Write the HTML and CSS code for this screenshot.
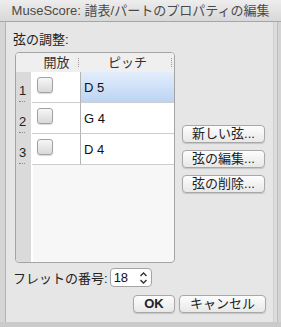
FILE: index.html
```html
<!DOCTYPE html>
<html lang="ja">
<head>
  <meta charset="UTF-8">
  <title>譜表/パートのプロパティの編集</title>
  <link rel="stylesheet" href="styles.css">
</head>
<body>

<div class="window">
  <div class="titlebar">MuseScore: 譜表/パートのプロパティの編集</div>
  <div class="body">
    <div class="edge-left"></div>
    <div class="sheet">
      <div class="section-label">弦の調整:</div>

      <div class="strings">
        <div class="string-table">
          <div class="th th-num"></div>
          <div class="th th-open">開放<span class="grip"></span></div>
          <div class="th th-pitch">ピッチ<span class="grip"></span></div>

          <div class="num"><span>1</span><i></i></div>
          <div class="cell cell-open"><span class="checkbox"></span></div>
          <div class="cell cell-pitch selected">D 5</div>

          <div class="num"><span>2</span><i></i></div>
          <div class="cell cell-open"><span class="checkbox"></span></div>
          <div class="cell cell-pitch">G 4</div>

          <div class="num"><span>3</span><i></i></div>
          <div class="cell cell-open"><span class="checkbox"></span></div>
          <div class="cell cell-pitch">D 4</div>

          <div class="num filler-num"></div>
          <div class="filler"></div>
        </div>

        <div class="side-buttons">
          <button class="btn">新しい弦...</button>
          <button class="btn">弦の編集...</button>
          <button class="btn">弦の削除...</button>
        </div>
      </div>

      <div class="fret-row">
        <span>フレットの番号:</span>
        <div class="spinner">
          <span class="spinner-value">18</span>
          <svg class="spinner-arrows" width="9" height="14" viewBox="0 0 9 14">
            <path d="M1.5 5 L4.5 2 L7.5 5" fill="none" stroke="#333" stroke-width="1.4"/>
            <path d="M1.5 9 L4.5 12 L7.5 9" fill="none" stroke="#333" stroke-width="1.4"/>
          </svg>
        </div>
      </div>

      <div class="actions">
        <button class="btn btn-ok">OK</button>
        <button class="btn btn-cancel">キャンセル</button>
      </div>
    </div>
    <div class="edge-right"></div>
  </div>
  <div class="under"></div>
</div>

</body>
</html>
```

FILE: styles.css
```css
html, body {
  margin: 0;
  padding: 0;
}

body {
  width: 281px;
  height: 327px;
  overflow: hidden;
  background-color: #d2d2d2;
  font-family: "Liberation Sans", "Noto Sans CJK JP", sans-serif;
  font-size: 13px;
  color: #222;
}

.window {
  width: 281px;
  height: 327px;
  display: flex;
  flex-direction: column;
}

.titlebar {
  height: 21px;
  line-height: 22px;
  text-align: center;
  color: #4a4a4a;
  background: linear-gradient(#ededed, #d8d8d8);
  border-bottom: 1px solid #a9a9a9;
  white-space: nowrap;
}

.body {
  display: flex;
  height: 300px;
}

.edge-left {
  width: 5px;
  background-color: #d6d6d6;
  border-right: 1px solid #c4c4c4;
}

.edge-right {
  width: 7px;
  background: linear-gradient(90deg, #dcdcdc 0, #dcdcdc 3px, #bdbdbd 3px, #bdbdbd 4px, #d4d4d4 4px);
  border-left: 1px solid #cfcfcf;
}

.sheet {
  flex: 1;
  background-color: #e6e6e6;
  padding: 9px 0 0 0;
  box-shadow: 0 1px 2px rgba(0,0,0,0.25);
}

.section-label {
  height: 21px;
  line-height: 18px;
  padding-left: 7px;
}

.strings {
  display: flex;
  align-items: flex-start;
}

.string-table {
  margin-left: 9px;
  width: 158px;
  height: 209px;
  border: 1px solid #a4a4a4;
  border-radius: 4px;
  overflow: hidden;
  background-color: #f7f7f7;
  display: grid;
  grid-template-columns: 16px 49px 1fr;
  grid-template-rows: 19px 31px 31px 31px 1fr;
}

.th {
  background-color: #efefef;
  text-align: center;
  line-height: 19px;
  position: relative;
  color: #333;
}

.grip {
  position: absolute;
  right: 1px;
  top: 5px;
  width: 1px;
  height: 9px;
  border-left: 1px dotted #9a9a9a;
}

.num {
  background-color: #dadada;
  border-right: 1px solid #ffffff;
  width: 15px;
  position: relative;
}

.num span {
  position: absolute;
  left: 3px;
  bottom: 6px;
  line-height: 13px;
  color: #222;
}

.num i {
  position: absolute;
  left: 3px;
  bottom: 1px;
  width: 6px;
  border-top: 1px dotted #8a8a8a;
}

.cell {
  background-color: #ffffff;
  border-bottom: 1px solid #cdcdcd;
}

.cell-open {
  border-right: 1px solid #b4b4b4;
  padding: 5px 0 0 5px;
  box-sizing: border-box;
}

.cell-pitch {
  padding-left: 3px;
  line-height: 31px;
  color: #111;
}

.cell-pitch.selected {
  background: linear-gradient(#e3edfb, #bcd4f4);
}

.checkbox {
  display: block;
  width: 14px;
  height: 14px;
  border: 1px solid #a2a2a2;
  border-radius: 3px;
  background: linear-gradient(#f6f6f6, #d9d9d9);
  box-shadow: 0 1px 1px rgba(0,0,0,0.15);
}

.filler {
  background-color: #f7f7f7;
  border-left: 1px solid #ffffff;
}

.side-buttons {
  margin-left: 7px;
  margin-top: 73px;
  display: flex;
  flex-direction: column;
  gap: 7px;
}

.btn {
  font-family: "Liberation Sans", "Noto Sans CJK JP", sans-serif;
  font-size: 13px;
  color: #222;
  height: 18px;
  padding: 0;
  line-height: 16px;
  border: 1px solid #a8a8a8;
  border-radius: 4px;
  background: linear-gradient(#fdfdfd, #e8e8e8);
  box-shadow: 0 1px 1px rgba(0,0,0,0.15);
}

.side-buttons .btn {
  width: 83px;
}

.fret-row {
  display: flex;
  align-items: center;
  gap: 2px;
  margin-top: 5px;
  padding-left: 7px;
  height: 19px;
}

.spinner {
  width: 34px;
  height: 17px;
  border: 1px solid #a4a4a4;
  border-radius: 4px;
  background-color: #ffffff;
  display: flex;
  align-items: center;
  justify-content: space-between;
  padding: 0 3px 0 3px;
  box-sizing: content-box;
}

.spinner-value {
  color: #111;
}

.actions {
  display: flex;
  justify-content: flex-end;
  gap: 4px;
  margin-top: 8px;
  padding-right: 7px;
}

.btn-ok {
  width: 42px;
  font-weight: bold;
}

.btn-cancel {
  width: 87px;
}

.under {
  flex: 1;
  background-color: #cacaca;
}
```
